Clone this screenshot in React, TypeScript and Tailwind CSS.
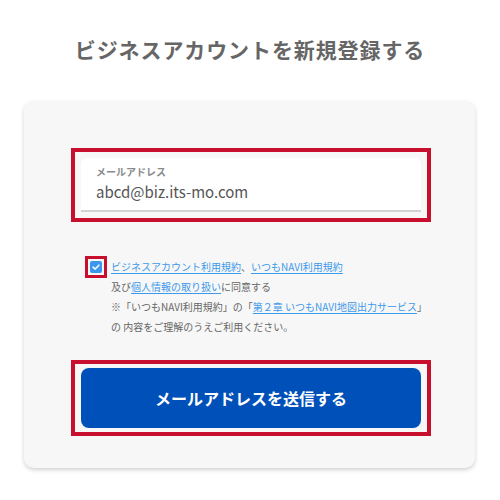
import React from 'react'

const font = '[font-family:"Noto_Sans_CJK_JP","Noto_Sans",sans-serif]'

function Link({ children }: { children: React.ReactNode }) {
  return <a href="#" className="text-[#3d99ea] underline underline-offset-2">{children}</a>
}

export default function App() {
  const [checked, setChecked] = React.useState(true)
  const [email, setEmail] = React.useState('abcd@biz.its-mo.com')

  return (
    <div className={`w-[500px] h-[500px] bg-white ${font}`}>
      <h1 className="pt-[36px] text-center text-[21px] leading-[26px] font-bold tracking-[0.9px] text-[#666]">
        ビジネスアカウントを新規登録する
      </h1>

      <div className="mx-[24px] mt-[39px] w-[451px] rounded-[10px] bg-[#f7f7f7] pl-[47px] pr-[44px] pt-[47px] pb-[32px] shadow-[0_2px_4px_rgba(0,0,0,0.18)]">
        {/* メールアドレス */}
        <div className="w-[360px] border-[4px] border-[#c8102e] p-[6px]">
          <label className="block rounded-t-[6px] border-b-2 border-[#d2d2d2] bg-white pl-[15px] pt-[9px] pb-[8px]">
            <span className="block text-[10px] leading-[10px] font-bold text-[#8a8a8a]">メールアドレス</span>
            <input
              value={email}
              onChange={(e) => setEmail(e.target.value)}
              className="mt-[5px] block w-full bg-transparent text-[15px] leading-[20px] text-[#555] outline-none"
            />
          </label>
        </div>

        {/* 同意 */}
        <div className="mt-[35px] ml-[14px] flex items-start gap-[4px]">
          <div className="mt-[-1px] flex h-[22px] w-[22px] shrink-0 items-center justify-center border-[3px] border-[#c8102e]">
            <button
              type="button"
              onClick={() => setChecked(!checked)}
              className={`flex h-[12px] w-[12px] items-center justify-center rounded-[2px] ${checked ? 'bg-[#3a97ee]' : 'bg-white border border-[#999]'}`}
              aria-label="同意する"
            >
              {checked ? (
                <svg viewBox="0 0 12 12" className="h-[10px] w-[10px]">
                  <path d="M2.5 6.2 L5 8.5 L9.5 3.8" fill="none" stroke="white" strokeWidth="1.8" strokeLinecap="round" strokeLinejoin="round" />
                </svg>
              ) : null}
            </button>
          </div>
          <p className="whitespace-nowrap text-[10px] leading-[20px] text-[#666]">
            <Link>ビジネスアカウント利用規約</Link>、<Link>いつもNAVI利用規約</Link>
            <br />
            及び<Link>個人情報の取り扱い</Link>に同意する
            <br />
            ※「いつもNAVI利用規約」の「<Link>第２章 いつもNAVI地図出力サービス</Link>」
            <br />
            の 内容をご理解のうえご利用ください。
          </p>
        </div>

        {/* 送信 */}
        <div className="mt-[23px] w-[360px] border-[4px] border-[#c8102e] px-[6px] py-[4px]">
          <button
            type="button"
            className="h-[60px] w-full rounded-[8px] bg-[#0050b9] text-[16px] font-bold text-white"
          >
            メールアドレスを送信する
          </button>
        </div>
      </div>
    </div>
  )
}
